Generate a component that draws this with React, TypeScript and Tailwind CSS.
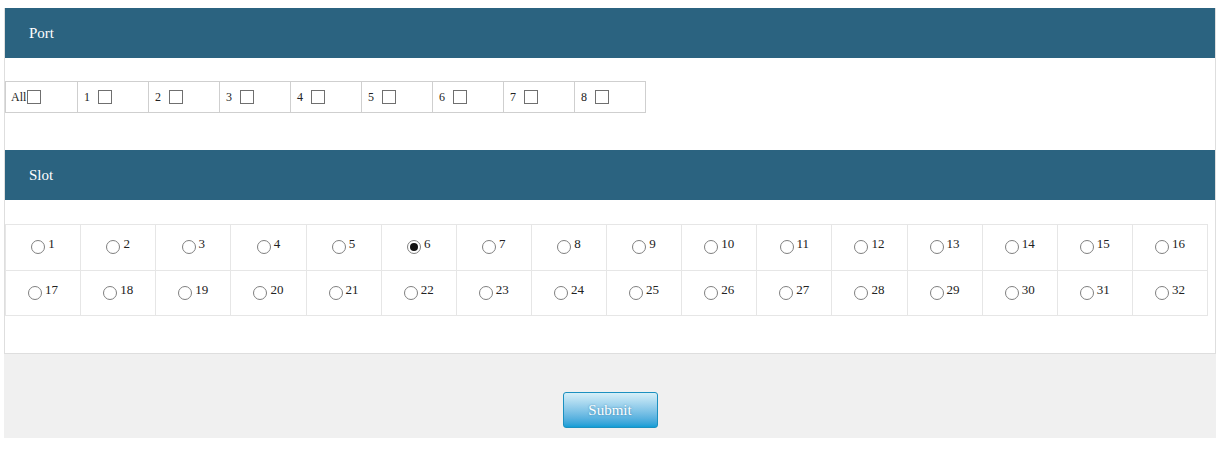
import { useState } from "react"

const ports = ["All", "1", "2", "3", "4", "5", "6", "7", "8"]
const slots = Array.from({ length: 32 }, (_, i) => i + 1)

function Box({ checked, onClick }: { checked: boolean; onClick: () => void }) {
  return (
    <span
      onClick={onClick}
      className="inline-block w-[14px] h-[14px] border border-[#6f6f6f] bg-white cursor-pointer relative"
    >
      {checked && <span className="absolute inset-[2px] bg-[#333]" />}
    </span>
  )
}

function Radio({ checked, onClick }: { checked: boolean; onClick: () => void }) {
  return (
    <span
      onClick={onClick}
      className="inline-flex items-center justify-center w-[14px] h-[14px] rounded-full border border-[#808080] bg-white cursor-pointer"
    >
      {checked && <span className="w-[8px] h-[8px] rounded-full bg-[#111]" />}
    </span>
  )
}

export default function App() {
  const [checked, setChecked] = useState<string[]>([])
  const [slot, setSlot] = useState(6)

  const toggle = (p: string) =>
    setChecked((c) => (c.includes(p) ? c.filter((x) => x !== p) : [...c, p]))

  return (
    <div className="w-[1225px] h-[454px] bg-white pl-[4px] pt-[8px] font-['Liberation_Serif',serif]">
      <div className="w-[1212px]">
        {/* Panel */}
        <div className="bg-white border-x border-b border-[#dedede]">
          {/* Port header */}
          <div className="h-[50px] bg-[#2b6380] flex items-center pl-[24px] text-white text-[15px]">
            Port
          </div>

          <div className="pt-[23px] pb-[37px]">
            <div className="flex w-[641px] border border-[#cfcfcf]">
              {ports.map((p, i) => (
                <div
                  key={p}
                  className={
                    "w-[71.2px] h-[30px] flex items-center text-[12px] text-[#222] " +
                    (i === 0 ? "pl-[5px] gap-[1px]" : "border-l border-[#cfcfcf] pl-[6px] gap-[8px]")
                  }
                >
                  <span>{p}</span>
                  <Box checked={checked.includes(p)} onClick={() => toggle(p)} />
                </div>
              ))}
            </div>
          </div>

          {/* Slot header */}
          <div className="h-[50px] bg-[#2b6380] flex items-center pl-[24px] text-white text-[15px]">
            Slot
          </div>

          <div className="pt-[24px] pb-[37px]">
            <div className="grid grid-cols-16 w-[1203px] border-t border-r border-[#e6e6e6]">
              {slots.map((s) => (
                <div
                  key={s}
                  className="h-[45.5px] flex items-center justify-center gap-[3px] border-l border-b border-[#e6e6e6] text-[13px] text-[#222]"
                >
                  <Radio checked={slot === s} onClick={() => setSlot(s)} />
                  <span className="mb-[7px]">{s}</span>
                </div>
              ))}
            </div>
          </div>
        </div>

        {/* Footer */}
        <div className="h-[84px] bg-[#f0f0f0] flex justify-center pt-[38px]">
          <button className="w-[95px] h-[36px] rounded-[3px] border border-[#1b90c0] bg-gradient-to-b from-[#d6eff8] to-[#0e9dd6] text-white text-[15px] [text-shadow:0_0_2px_rgba(0,90,140,0.6)]">
            Submit
          </button>
        </div>
      </div>
    </div>
  )
}
